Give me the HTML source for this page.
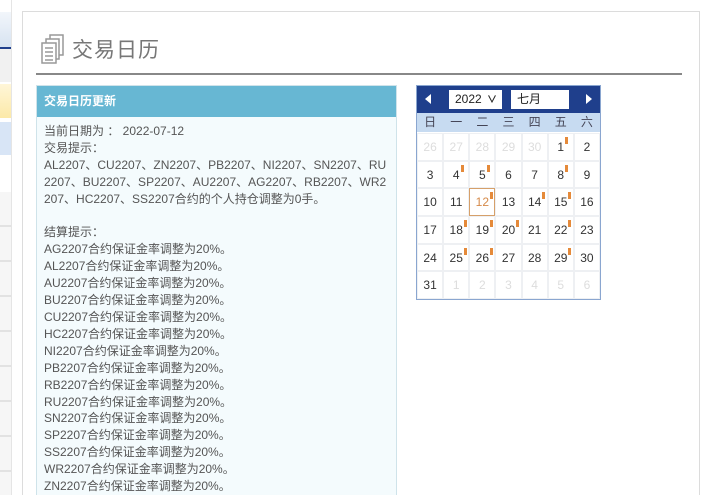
<!DOCTYPE html>
<html><head><meta charset="utf-8"><style>
*{margin:0;padding:0;box-sizing:border-box}
html,body{width:720px;height:495px;overflow:hidden}
body{background:#fff;font-family:"Liberation Sans","Noto Sans CJK SC",sans-serif;position:relative;color:#333}
.abs{position:absolute}
.panel{left:22px;top:11px;width:678px;height:484px;border:1px solid #dcdcdc;border-bottom:none}
.title{left:72px;top:34px;font-size:21px;color:#777;letter-spacing:1px}
.hr{left:36px;top:73px;width:646px;height:2px;background:#888}
.box{left:36px;top:85px;width:361px;height:410px;border:1px solid #cfe3ea;border-bottom:none;background:#f4fbfd}
.boxh{left:37px;top:86px;width:359px;height:31px;background:#67b7d3;color:#fff;font-weight:bold;font-size:12px;line-height:31px;padding-left:7px}
.txt{left:44px;top:123px;width:346px;font-size:12px;line-height:16.9px;color:#555;word-break:break-all}
.cal{left:416px;top:85px;width:185px;height:215px;border:1px solid #8aa6d0;background:#fff}
.ch{left:0;top:0;width:183px;height:27px;background:#1f3f8c}
.wd{left:0;top:27px;width:183px;height:19px;background:#c7dbf1;display:flex}
.wd span{flex:1;text-align:center;font-size:12px;line-height:19px;color:#445}
.grid{left:0;top:47px;width:183px;display:grid;grid-template-columns:repeat(7,1fr);grid-auto-rows:27.7px}
.grid div{border:1px solid #eef0f3;font-size:12px;text-align:center;line-height:26px;color:#333;position:relative}
.grid .o{color:#ddd}
.grid b{display:inline-block;width:3px;height:7px;background:#e58a3a;vertical-align:top;margin-top:3px;margin-left:1px;margin-right:-4px}
.grid .t{border:1px solid #d6a06a;color:#d58a4a}
.sel{height:19px;top:4px;background:#fff;font-size:12px;line-height:19px;padding-left:6px;color:#222}
</style></head><body>
<div class="abs" style="left:0;top:12px;width:11px;height:35px;background:linear-gradient(#f2f6fb,#d7e3f1)"></div>
<div class="abs" style="left:0;top:47px;width:11px;height:2px;background:#1f3f8c"></div>
<div class="abs" style="left:0;top:49px;width:11px;height:33px;background:#f1f1f1"></div>
<div class="abs" style="left:0;top:84px;width:11px;height:34px;background:linear-gradient(#fff6d8,#fce9a8)"></div>
<div class="abs" style="left:0;top:122px;width:11px;height:33px;background:#d8e5f6"></div>
<div class="abs" style="left:0;top:192px;width:11px;height:303px;background:repeating-linear-gradient(#f6f6f6 0,#f6f6f6 33px,#e2e2e2 33px,#e2e2e2 35px)"></div>
<div class="abs" style="left:11px;top:0;width:1px;height:495px;background:#e5e5e5"></div>
<div class="abs panel"></div>
<svg class="abs" style="left:40px;top:34px" width="28" height="30" viewBox="0 0 28 30" fill="none" stroke="#999" stroke-width="1.5">
<rect x="2" y="9" width="14" height="20"/><path d="M6 9V5h13v20h-3M10 5V1h13v20h-4"/><path d="M5 14h8M5 18h8M5 22h8M5 26h8"/></svg>
<div class="abs title">交易日历</div>
<div class="abs hr"></div>
<div class="abs box"></div>
<div class="abs boxh">交易日历更新</div>
<div class="abs txt">当前日期为 ： 2022-07-12<br>交易提示：<br>AL2207、CU2207、ZN2207、PB2207、NI2207、SN2207、RU2207、BU2207、SP2207、AU2207、AG2207、RB2207、WR2207、HC2207、SS2207合约的个人持仓调整为0手。<br><br>结算提示：<br>AG2207合约保证金率调整为20%。<br>AL2207合约保证金率调整为20%。<br>AU2207合约保证金率调整为20%。<br>BU2207合约保证金率调整为20%。<br>CU2207合约保证金率调整为20%。<br>HC2207合约保证金率调整为20%。<br>NI2207合约保证金率调整为20%。<br>PB2207合约保证金率调整为20%。<br>RB2207合约保证金率调整为20%。<br>RU2207合约保证金率调整为20%。<br>SN2207合约保证金率调整为20%。<br>SP2207合约保证金率调整为20%。<br>SS2207合约保证金率调整为20%。<br>WR2207合约保证金率调整为20%。<br>ZN2207合约保证金率调整为20%。</div>
<div class="abs cal">
<div class="abs ch">
<svg class="abs" style="left:8px;top:8px" width="6" height="10"><path d="M6 0L0 5L6 10Z" fill="#fff"/></svg>
<div class="abs sel" style="left:32px;width:53px">2022 <span style="font-size:10px;font-weight:bold;margin-left:2px">∨</span></div>
<div class="abs sel" style="left:94px;width:58px">七月 <span style="font-size:10px;font-weight:bold;margin-left:16px">∨</span></div>
<svg class="abs" style="left:169px;top:8px" width="6" height="10"><path d="M0 0L6 5L0 10Z" fill="#fff"/></svg>
</div>
<div class="abs wd"><span>日</span><span>一</span><span>二</span><span>三</span><span>四</span><span>五</span><span>六</span></div>
<div class="abs grid">
<div class="o">26</div><div class="o">27</div><div class="o">28</div><div class="o">29</div><div class="o">30</div><div>1<b></b></div><div>2</div>
<div>3</div><div>4<b></b></div><div>5<b></b></div><div>6</div><div>7</div><div>8<b></b></div><div>9</div>
<div>10</div><div>11</div><div class="t">12<b></b></div><div>13</div><div>14<b></b></div><div>15<b></b></div><div>16</div>
<div>17</div><div>18<b></b></div><div>19<b></b></div><div>20<b></b></div><div>21</div><div>22<b></b></div><div>23</div>
<div>24</div><div>25<b></b></div><div>26<b></b></div><div>27</div><div>28</div><div>29<b></b></div><div>30</div>
<div>31</div><div class="o">1</div><div class="o">2</div><div class="o">3</div><div class="o">4</div><div class="o">5</div><div class="o">6</div>
</div>
</div>
</body></html>
